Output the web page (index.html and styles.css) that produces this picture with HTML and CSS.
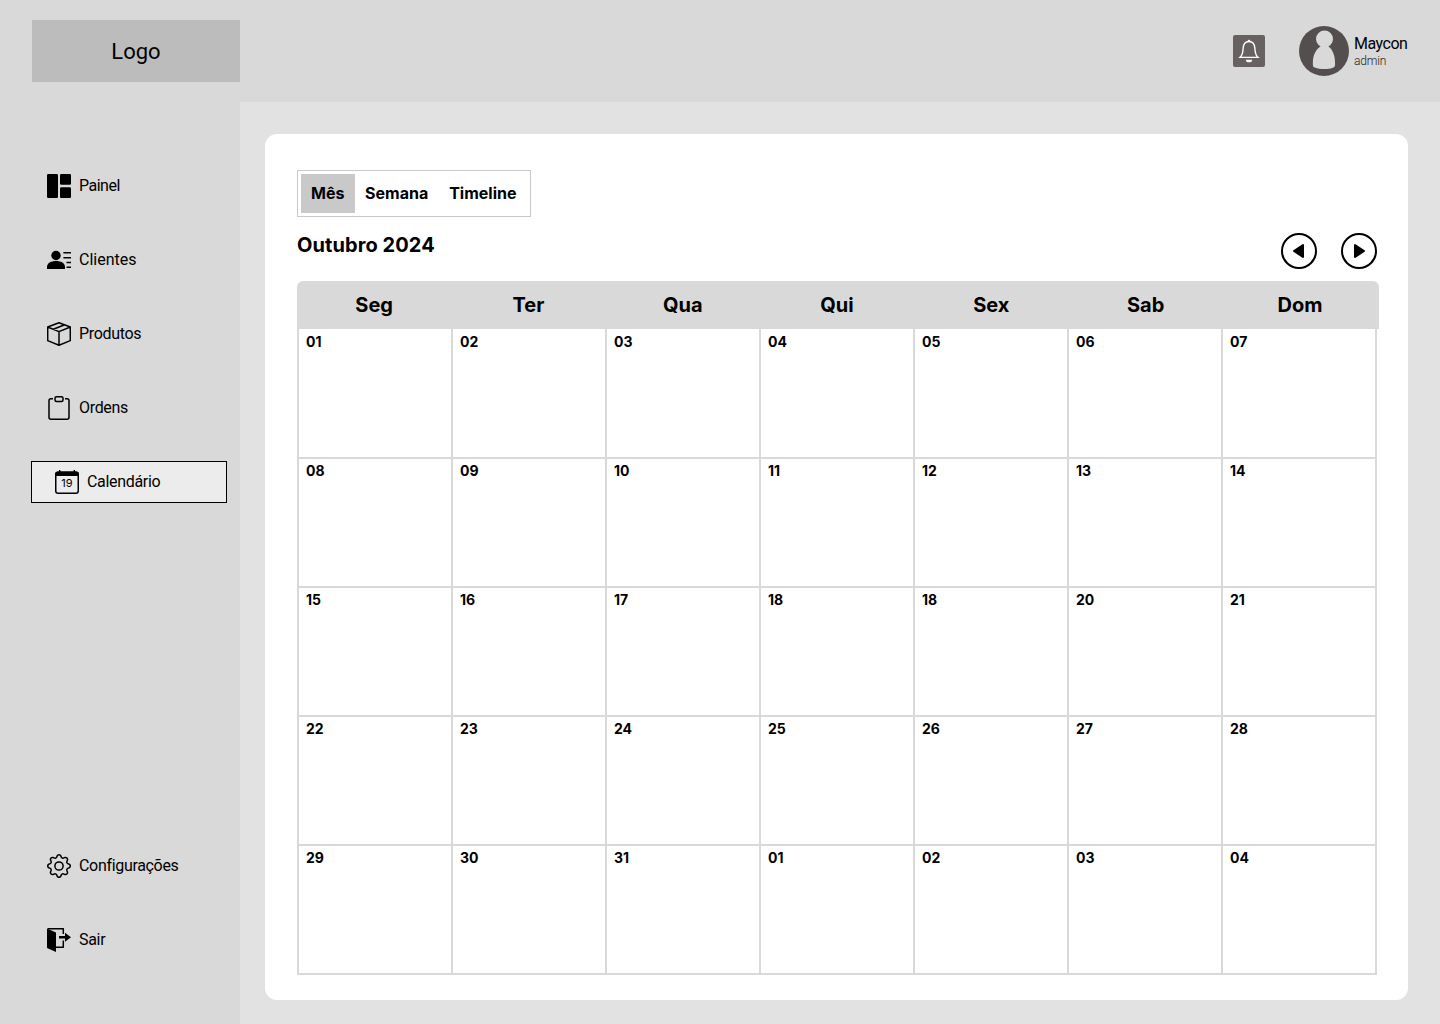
FILE: index.html
```html
<!DOCTYPE html>
<html lang="pt-BR">
<head>
<meta charset="utf-8">
<title>Calendário</title>
<link rel="stylesheet" href="styles.css">
</head>
<body>
<div class="app">
  <aside class="sidebar">
    <div class="logo">Logo</div>
    <nav class="nav">
      <a class="item"><svg viewBox="0 0 24 24"><rect width="11" height="24" rx="1.3"/><rect x="13" width="11" height="10.8" rx="1.3"/><rect x="13" y="13.2" width="11" height="10.8" rx="1.3"/></svg><span class="tight">Painel</span></a>
      <a class="item"><svg viewBox="0 0 24 24"><circle cx="9" cy="7.500" r="4.700"/><path d="M0 21v-2c0-4 4-6 9-6s9 2 9 6v2z"/><path class="line" d="M16.400 4.800H24M16.400 9.800H24M19.500 14.600H24M19.500 19.200H24"/></svg><span>Clientes</span></a>
      <a class="item"><svg viewBox="0 0 24 24"><path class="line" d="M12 .8 23.3 5v13.6L12 23.2.7 18.6V5zM.7 5 12 9.6 23.3 5M12 9.6v13.6M6.3 7.2l11.4-4.4"/></svg><span class="snug">Produtos</span></a>
      <a class="item"><svg viewBox="0 0 24 24"><path class="line" d="M6 2.8H4a2 2 0 0 0-2 2v16.4a2 2 0 0 0 2 2h16a2 2 0 0 0 2-2V4.800a2 2 0 0 0-2-2h-2"/><rect class="line" x="8" y=".8" width="8" height="4.600" rx="1.500"/></svg><span class="snug">Ordens</span></a>
      <a class="item active"><svg viewBox="0 0 24 24"><rect class="line" x=".75" y="2.250" width="22.500" height="21" rx="2.300"/><path d="M0 6V4a2.500 2.500 0 0 1 2.500-2.500H4V0h1.400v1.500h13.200V0H20v1.500h1.500A2.500 2.500 0 0 1 24 4v2z"/><text x="12" y="17.400" text-anchor="middle">19</text></svg><span class="snug">Calendário</span></a>
    </nav>
    <nav class="nav footer">
      <a class="item"><svg viewBox="0 0 24 24"><g transform="scale(1.5)"><path d="M8 4.754a3.246 3.246 0 1 0 0 6.492 3.246 3.246 0 0 0 0-6.492M5.754 8a2.246 2.246 0 1 1 4.492 0 2.246 2.246 0 0 1-4.492 0"/><path d="M9.796 1.343c-.527-1.790-3.065-1.790-3.592 0l-.094.319a.873.873 0 0 1-1.255.520l-.292-.160c-1.640-.892-3.433.902-2.540 2.541l.159.292a.873.873 0 0 1-.520 1.255l-.319.094c-1.790.527-1.790 3.065 0 3.592l.319.094a.873.873 0 0 1 .520 1.255l-.160.292c-.892 1.640.901 3.434 2.541 2.540l.292-.159a.873.873 0 0 1 1.255.520l.094.319c.527 1.790 3.065 1.790 3.592 0l.094-.319a.873.873 0 0 1 1.255-.520l.292.160c1.640.893 3.434-.902 2.540-2.541l-.159-.292a.873.873 0 0 1 .520-1.255l.319-.094c1.790-.527 1.790-3.065 0-3.592l-.319-.094a.873.873 0 0 1-.520-1.255l.160-.292c.893-1.640-.902-3.433-2.541-2.540l-.292.159a.873.873 0 0 1-1.255-.520zm-2.633.283c.246-.835 1.428-.835 1.674 0l.094.319a1.873 1.873 0 0 0 2.693 1.115l.291-.160c.764-.415 1.600.420 1.184 1.185l-.159.292a1.873 1.873 0 0 0 1.116 2.692l.318.094c.835.246.835 1.428 0 1.674l-.319.094a1.873 1.873 0 0 0-1.115 2.693l.160.291c.415.764-.420 1.600-1.185 1.184l-.291-.159a1.873 1.873 0 0 0-2.693 1.116l-.094.318c-.246.835-1.428.835-1.674 0l-.094-.319a1.873 1.873 0 0 0-2.692-1.115l-.292.160c-.764.415-1.600-.420-1.184-1.185l.159-.291A1.873 1.873 0 0 0 1.945 8.930l-.319-.094c-.835-.246-.835-1.428 0-1.674l.319-.094A1.873 1.873 0 0 0 3.060 4.377l-.160-.292c-.415-.764.420-1.600 1.185-1.184l.292.159a1.873 1.873 0 0 0 2.692-1.115z"/></g></svg><span class="snug">Configurações</span></a>
      <a class="item"><svg viewBox="0 0 24 24"><path d="M0 .5 9 4.500V24L0 20z"/><path class="line" d="M.7.750h15.600V6M16.300 12.500v6.700H9"/><path d="M12 8h6V4.800L24 9.300l-6 4.500v-3.300h-6z"/></svg><span class="snug">Sair</span></a>
    </nav>
  </aside>
  <div class="page">
    <header class="topbar">
      <div class="bell"><svg viewBox="0 0 32 32"><path d="M16 6.500c-4 0-5.700 3.200-5.900 7-.2 4-1 7.200-3 8.900h17.800c-2-1.700-2.800-4.900-3-8.900-.2-3.800-1.900-7-5.900-7z"/><circle class="clapper" cx="16" cy="6" r="1.300"/><path class="clapper" d="M12.900 24.700h6.300a3.100 2.600 0 0 1-6.300 0z"/></svg></div>
      <svg class="avatar" viewBox="0 0 50 50"><circle cx="25" cy="25" r="25"/><circle class="person" cx="25.500" cy="13" r="8.500"/><path class="person" d="M21.500 18h8v2.500c4.300 3 6.500 9.500 6.500 15.500 0 3 .4 4.800-1.500 5.600-5 2-13.200 2-18.700 0-2.300-.8-1.900-2.600-1.900-5.600 0-6 2.600-12.500 7.600-15.500z"/></svg>
      <div class="user"><span class="name">Maycon</span><span class="role">admin</span></div>
    </header>
    <main class="card">
      <div class="tabs"><span class="tab selected">Mês</span><span class="tab">Semana</span><span class="tab">Timeline</span></div>
      <div class="heading">
        <h1>Outubro 2024</h1>
        <div class="arrows">
          <svg viewBox="0 0 36 36"><circle cx="18" cy="18" r="17"/><path d="M22 12v12L13 18z"/></svg>
          <svg viewBox="0 0 36 36"><circle cx="18" cy="18" r="17"/><path d="M14 12v12L23 18z"/></svg>
        </div>
      </div>
      <div class="weekdays"><span>Seg</span><span>Ter</span><span>Qua</span><span>Qui</span><span>Sex</span><span>Sab</span><span>Dom</span></div>
      <div class="days">
        <div>01</div><div>02</div><div>03</div><div>04</div><div>05</div><div>06</div><div>07</div>
        <div>08</div><div>09</div><div>10</div><div>11</div><div>12</div><div>13</div><div>14</div>
        <div>15</div><div>16</div><div>17</div><div>18</div><div>18</div><div>20</div><div>21</div>
        <div>22</div><div>23</div><div>24</div><div>25</div><div>26</div><div>27</div><div>28</div>
        <div>29</div><div>30</div><div>31</div><div>01</div><div>02</div><div>03</div><div>04</div>
      </div>
    </main>
  </div>
</div>
</body>
</html>
```
FILE: styles.css
```css
* { box-sizing: border-box; }
body { margin: 0; background: #e2e2e2; color: #000; font-family: Roboto, sans-serif; }
.app { display: flex; width: 1440px; height: 1024px; }
.sidebar { display: flex; flex-direction: column; width: 240px; padding: 20px 0 63px 31px; background: #d9d9d9; }
.logo { display: flex; align-items: center; justify-content: center; height: 62px; margin-left: 1px; background: #bcbcbc; font-size: 22px; }
.nav { display: flex; flex-direction: column; gap: 32px; margin-top: 83px; }
.footer { margin-top: auto; }
.item { display: flex; align-items: center; gap: 8px; width: 196px; height: 42px; padding-left: 16px; font-size: 16px; line-height: 20px; }
.item svg { flex: none; width: 24px; height: 24px; }
.item.active { padding-left: 23px; border: 1px solid #000; background: #ececec; }
.item text { font-family: Inter, sans-serif; font-size: 11px; }
.snug { letter-spacing: -0.32px; }
.tight { letter-spacing: -0.5px; }
.line { fill: none; stroke: #000; stroke-width: 1.5; stroke-linejoin: round; }
.page { display: flex; flex-direction: column; width: 1200px; }
.topbar { display: flex; align-items: center; justify-content: flex-end; height: 102px; padding-right: 32px; background: #d9d9d9; }
.bell { width: 32px; height: 32px; margin-right: 34px; border-radius: 2px; background: #686162; }
.bell svg { display: block; fill: none; stroke: #fff; stroke-width: 1.4; }
.bell .clapper { fill: #fff; stroke: none; }
.avatar { width: 50px; height: 50px; margin-right: 5px; fill: #544e4f; }
.person { fill: #d9d9d9; }
.user { display: flex; flex-direction: column; width: 54px; padding-top: 1px; }
.name { font-size: 16px; line-height: 18px; letter-spacing: -0.5px; }
.role { color: #222; font-size: 12px; font-weight: 300; line-height: 16px; letter-spacing: -0.2px; }
.card { display: flex; flex-direction: column; align-items: flex-start; width: 1143px; height: 866px; margin: 32px 0 0 25px; padding: 36px 29px 0 32px; border-radius: 12px; background: #fff; font-family: Inter, sans-serif; font-weight: 700; }
.tabs { display: flex; width: 234px; height: 47px; padding: 3px; border: 1px solid #c9c9c9; font-size: 16px; }
.tab { display: flex; align-items: center; height: 39px; padding: 0 10.500px 2px; }
.tab.selected { width: 54px; padding: 0 10px 2px; background: #c9c9c9; }
.heading { display: flex; justify-content: space-between; width: 1080px; height: 64px; padding-top: 16px; }
h1 { margin: 0; font-size: 20px; line-height: 24px; letter-spacing: 0.08px; }
.arrows { display: flex; gap: 24px; }
.arrows svg { width: 36px; height: 36px; stroke: #000; stroke-width: 2; stroke-linejoin: round; }
.arrows circle { fill: none; }
.weekdays { display: grid; grid-template-columns: repeat(7, 154.300px); align-items: center; width: 1082px; height: 48px; border-radius: 6px 6px 0 0; background: #d9d9d9; font-size: 20px; text-align: center; }
.days { display: grid; grid-template-columns: repeat(7, 154px); grid-template-rows: 130px repeat(4, 129px); border-left: 2px solid #d9d9d9; font-size: 14px; line-height: 17px; }
.days div { display: flex; align-items: flex-start; padding: 3px 0 0 7px; border: solid #d9d9d9; border-width: 0 2px 2px 0; }
.days div:nth-child(-n+7) { padding-top: 4px; }
```
